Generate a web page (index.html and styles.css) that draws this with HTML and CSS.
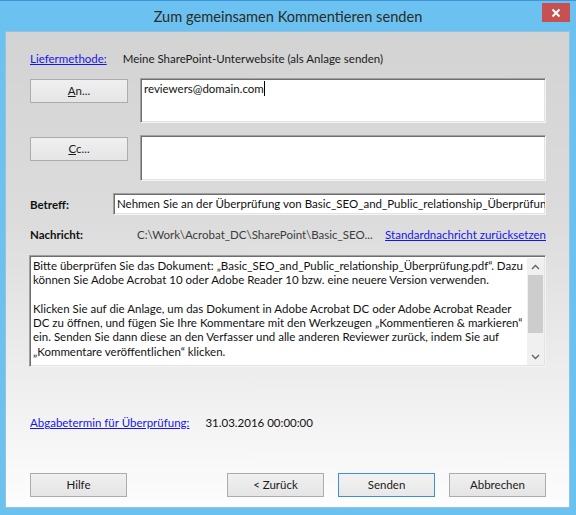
FILE: index.html
```html
<!DOCTYPE html>
<html lang="de">
<head>
<meta charset="utf-8">
<title>Zum gemeinsamen Kommentieren senden</title>
<link rel="stylesheet" href="styles.css">
</head>
<body>
<div class="window">
  <div class="titlebar">
    <div class="title">Zum gemeinsamen Kommentieren senden</div>
    <div class="close"><svg width="10" height="10" viewBox="0 0 10 10"><path d="M1.5 1.5 L8.5 8.5 M8.5 1.5 L1.5 8.5" stroke="#fff" stroke-width="2" fill="none"/></svg></div>
  </div>
  <div class="content">
    <div class="row-delivery">
      <a class="link" href="#">Liefermethode:</a>
      <span class="value">Meine SharePoint-Unterwebsite (als Anlage senden)</span>
    </div>
    <div class="row-recipient">
      <button class="btn btn-side"><u>A</u>n...</button>
      <div class="field field-to">reviewers@domain.com<span class="caret"></span></div>
    </div>
    <div class="row-recipient row-cc">
      <button class="btn btn-side"><u>C</u>c...</button>
      <div class="field field-cc"></div>
    </div>
    <div class="row-subject">
      <span class="label label-subject">Betreff:</span>
      <div class="field field-single">Nehmen Sie an der Überprüfung von Basic_SEO_and_Public_relationship_Überprüfung</div>
    </div>
    <div class="row-message-head">
      <span class="label label-message">Nachricht:</span>
      <span class="path">C:\Work\Acrobat_DC\SharePoint\Basic_SEO...</span>
      <a class="link link-reset" href="#">Standardnachricht zurücksetzen</a>
    </div>
    <div class="field message">
      <div class="message-text">
        <div class="line">Bitte überprüfen Sie das Dokument: „Basic_SEO_and_Public_relationship_Überprüfung.pdf“. Dazu</div>
        <div class="line">können Sie Adobe Acrobat 10 oder Adobe Reader 10 bzw. eine neuere Version verwenden.</div>
        <div class="line">&nbsp;</div>
        <div class="line">Klicken Sie auf die Anlage, um das Dokument in Adobe Acrobat DC oder Adobe Acrobat Reader</div>
        <div class="line">DC zu öffnen, und fügen Sie Ihre Kommentare mit den Werkzeugen „Kommentieren &amp; markieren“</div>
        <div class="line">ein. Senden Sie dann diese an den Verfasser und alle anderen Reviewer zurück, indem Sie auf</div>
        <div class="line">„Kommentare veröffentlichen“ klicken.</div>
      </div>
      <div class="scrollbar">
        <div class="arrow"><svg width="9" height="6" viewBox="0 0 9 6"><path d="M1 5 L4.5 1.5 L8 5" stroke="#606060" stroke-width="1.3" fill="none"/></svg></div>
        <div class="track"><div class="thumb"></div></div>
        <div class="arrow"><svg width="9" height="6" viewBox="0 0 9 6"><path d="M1 1 L4.5 4.5 L8 1" stroke="#606060" stroke-width="1.3" fill="none"/></svg></div>
      </div>
    </div>
    <div class="row-due">
      <a class="link" href="#">Abgabetermin für Überprüfung:</a>
      <span class="due-value">31.03.2016 00:00:00</span>
    </div>
    <div class="footer">
      <button class="btn btn-foot">Hilfe</button>
      <div class="spacer"></div>
      <button class="btn btn-foot">&lt; Zurück</button>
      <button class="btn btn-foot btn-default">Senden</button>
      <button class="btn btn-foot">Abbrechen</button>
    </div>
  </div>
</div>
</body>
</html>
```

FILE: styles.css
```css
* { box-sizing: border-box; }
html, body { margin: 0; padding: 0; }
body {
  width: 576px;
  height: 515px;
  overflow: hidden;
  font-family: Lato, "Noto Sans", sans-serif;
  font-size: 11.5px;
  color: #1a1a1a;
}
.window {
  width: 576px;
  height: 515px;
  background: #6bc1ef;
  border-top: 1px solid #3f93d6;
}
.titlebar {
  height: 30px;
  display: grid;
  grid-template-columns: 1fr auto 1fr;
  align-items: start;
}
.title {
  grid-column: 2;
  font-size: 14.6px;
  line-height: 20px;
  margin-top: 6px;
  color: #2b2b2b;
  white-space: nowrap;
}
.close {
  grid-column: 3;
  justify-self: end;
  margin-top: 2px;
  margin-right: 6px;
  width: 28px;
  height: 19px;
  background: #c75050;
  display: flex;
  align-items: center;
  justify-content: center;
}
.content {
  margin: 0 6px 0 5px;
  height: 477px;
  border: 1px solid #93c2e4;
  background: linear-gradient(#d3d3d3 0%, #dcdcdc 40%, #f2f2f2 80%, #fdfdfd 100%);
  padding: 19px 23px 0 24px;
}
.link {
  color: #1515f0;
  text-decoration: underline;
  white-space: nowrap;
}
.row-delivery {
  display: flex;
  line-height: 16px;
  height: 16px;
}
.row-delivery .value { margin-left: 16px; }
.row-recipient {
  display: flex;
  align-items: flex-start;
  margin-top: 11px;
}
.row-cc { margin-top: 12px; }
.btn {
  font-family: inherit;
  font-size: 11.5px;
  color: #1a1a1a;
  border: 1px solid #acacac;
  background: linear-gradient(#f0f0f0, #e5e5e5);
  padding: 0;
  height: 24px;
  line-height: 20px;
  text-align: center;
}
.btn-side {
  width: 98px;
  margin-top: 1px;
  flex: none;
}
.row-cc .btn-side { margin-top: 2px; }
.field {
  background: #fff;
  border-top: 1px solid #a0a0a0;
  border-left: 1px solid #a0a0a0;
  border-right: 1px solid #f4f4f4;
  border-bottom: 1px solid #f4f4f4;
  box-shadow: inset 1px 1px 0 #6e6e6e, inset -1px -1px 0 #e3e3e3;
  color: #111;
}
.field-to, .field-cc {
  margin-left: 12px;
  flex: 1;
  padding: 2px 3px;
  line-height: 16px;
}
.field-to { height: 45px; }
.field-cc { height: 46px; }
.caret {
  display: inline-block;
  width: 1px;
  height: 15px;
  background: #000;
  vertical-align: -3px;
}
.row-subject {
  display: flex;
  align-items: center;
  margin-top: 12px;
}
.label {
  font-weight: bold;
  color: #111;
  white-space: nowrap;
}
.label-subject { width: 83px; flex: none; }
.field-single {
  flex: 1;
  height: 22px;
  padding: 2px 3px;
  line-height: 16px;
  white-space: nowrap;
  overflow: hidden;
}
.row-message-head {
  display: flex;
  align-items: center;
  margin-top: 12px;
  height: 16px;
  line-height: 16px;
}
.label-message { width: 107px; flex: none; }
.path { color: #3c3c3c; flex: 1; white-space: nowrap; }
.message {
  margin-top: 12px;
  height: 112px;
  display: flex;
  margin-left: -1px;
}
.message-text {
  flex: 1;
  padding: 3px 3px 0 3px;
  line-height: 14.3px;
  overflow: hidden;
}
.line { white-space: nowrap; }
.scrollbar {
  width: 17px;
  margin: 2px 1px 1px 0;
  background: #f0f0f0;
  display: flex;
  flex-direction: column;
}
.arrow {
  height: 17px;
  display: flex;
  align-items: center;
  justify-content: center;
}
.track {
  flex: 1;
  padding: 0 1px;
}
.thumb {
  height: 58px;
  background: #cdcdcd;
}
.row-due {
  display: flex;
  margin-top: 48px;
  height: 16px;
  line-height: 16px;
}
.due-value { margin-left: 16px; color: #111; }
.footer {
  display: flex;
  margin-top: 42px;
  gap: 14px;
}
.spacer { flex: 1; }
.btn-foot { width: 97px; }
.btn-default {
  border-color: #3d8ee0;
  background: linear-gradient(#f2f2f2, #e8e8e8);
}
```
